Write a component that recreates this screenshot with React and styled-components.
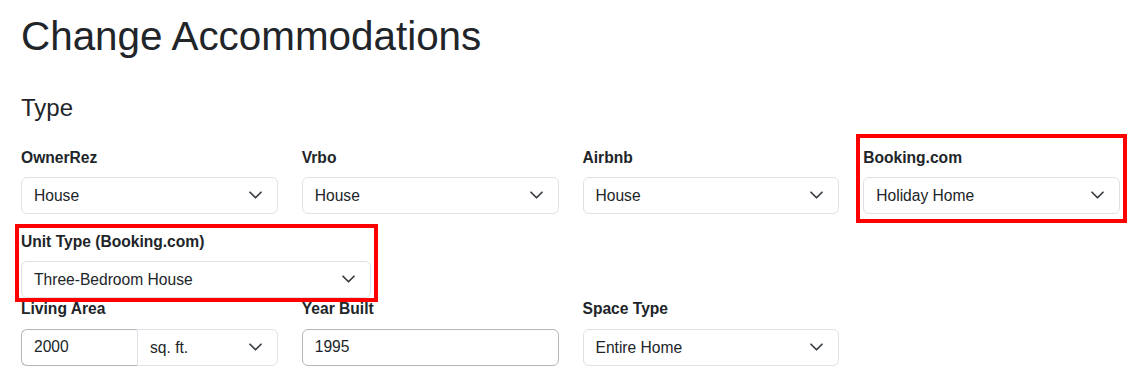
import React from "react";
import styled, { createGlobalStyle, css } from "styled-components";

const GlobalStyle = createGlobalStyle`
  * {
    box-sizing: border-box;
  }
  body {
    margin: 0;
    background: #fff;
    color: #212529;
    font-family: "Liberation Sans", Arial, sans-serif;
  }
`;

const Page = styled.main`
  padding: 12px 16px 20px 21px;
`;

const Title = styled.h1`
  margin: 0;
  font-size: 40.4px;
  font-weight: 400;
  line-height: 48px;
`;

const SectionTitle = styled.h4`
  margin: 34px 0 0;
  font-size: 24px;
  font-weight: 400;
  line-height: 1.2;
`;

const Row = styled.div`
  display: grid;
  grid-template-columns: repeat(${props => props.$cols}, minmax(0, 1fr));
  column-gap: 24px;
  margin-top: ${props => props.$top}px;
`;

const Field = styled.div`
  position: relative;
  min-width: 0;
  ${props =>
    props.$mark &&
    css`
      &::after {
        content: "";
        position: absolute;
        inset: ${props.$mark};
        border: 4px solid #ff0000;
        pointer-events: none;
        z-index: 1;
      }
    `}
`;

const Label = styled.label`
  display: block;
  margin-bottom: ${props => props.$gap || 8}px;
  font-size: 15.6px;
  font-weight: 700;
  line-height: 23px;
`;

const SelectWrap = styled.div`
  position: relative;
  flex: 1;
  min-width: 0;
`;

const Select = styled.select`
  display: block;
  width: 100%;
  height: 37px;
  margin: 0;
  padding: 0 36px 0 12px;
  appearance: none;
  background: #fff;
  border: 1px solid #dee2e6;
  border-radius: ${props => (props.$joined ? "0 6px 6px 0" : "6px")};
  color: #212529;
  font-family: inherit;
  font-size: 15.6px;
  outline: none;
`;

const Chevron = styled.svg`
  position: absolute;
  right: 16px;
  top: 50%;
  transform: translateY(-50%);
  pointer-events: none;
`;

const TextInput = styled.input`
  display: block;
  width: ${props => props.$width || "100%"};
  height: 37px;
  margin: 0;
  padding: 0 12px;
  background: #fff;
  border: 1px solid #b1b7bd;
  border-right: ${props => (props.$joined ? "none" : "1px solid #b1b7bd")};
  border-radius: ${props => (props.$joined ? "6px 0 0 6px" : "6px")};
  color: #212529;
  font-family: inherit;
  font-size: 15.6px;
  outline: none;
`;

const InputGroup = styled.div`
  display: flex;
`;

function Dropdown({ value, joined }) {
  return (
    <SelectWrap>
      <Select defaultValue={value} $joined={joined}>
        <option>{value}</option>
      </Select>
      <Chevron width="13" height="8" viewBox="0 0 13 8">
        <path
          d="M1 1.25l5.5 5.5 5.5-5.5"
          fill="none"
          stroke="#343a40"
          strokeWidth="1.7"
          strokeLinecap="round"
          strokeLinejoin="round"
        />
      </Chevron>
    </SelectWrap>
  );
}

const channels = [
  { label: "OwnerRez", value: "House" },
  { label: "Vrbo", value: "House" },
  { label: "Airbnb", value: "House" },
  { label: "Booking.com", value: "Holiday Home", mark: "-12px -7px -9px -7px" }
];

export default function App() {
  return (
    <>
      <GlobalStyle />
      <Page>
        <Title>Change Accommodations</Title>
        <SectionTitle>Type</SectionTitle>

        <Row $cols={4} $top={23}>
          {channels.map(ch => (
            <Field key={ch.label} $mark={ch.mark}>
              <Label>{ch.label}</Label>
              <Dropdown value={ch.value} />
            </Field>
          ))}
        </Row>

        <Row $cols={3} $top={16}>
          <Field $mark="-6px -7px -4px -6px">
            <Label>Unit Type (Booking.com)</Label>
            <Dropdown value="Three-Bedroom House" />
          </Field>
        </Row>

        <Row $cols={4} $top={-1}>
          <Field>
            <Label $gap={9}>Living Area</Label>
            <InputGroup>
              <TextInput $width="116px" $joined defaultValue="2000" />
              <Dropdown value="sq. ft." joined />
            </InputGroup>
          </Field>
          <Field>
            <Label $gap={9}>Year Built</Label>
            <TextInput defaultValue="1995" />
          </Field>
          <Field>
            <Label $gap={9}>Space Type</Label>
            <Dropdown value="Entire Home" />
          </Field>
        </Row>
      </Page>
    </>
  );
}
